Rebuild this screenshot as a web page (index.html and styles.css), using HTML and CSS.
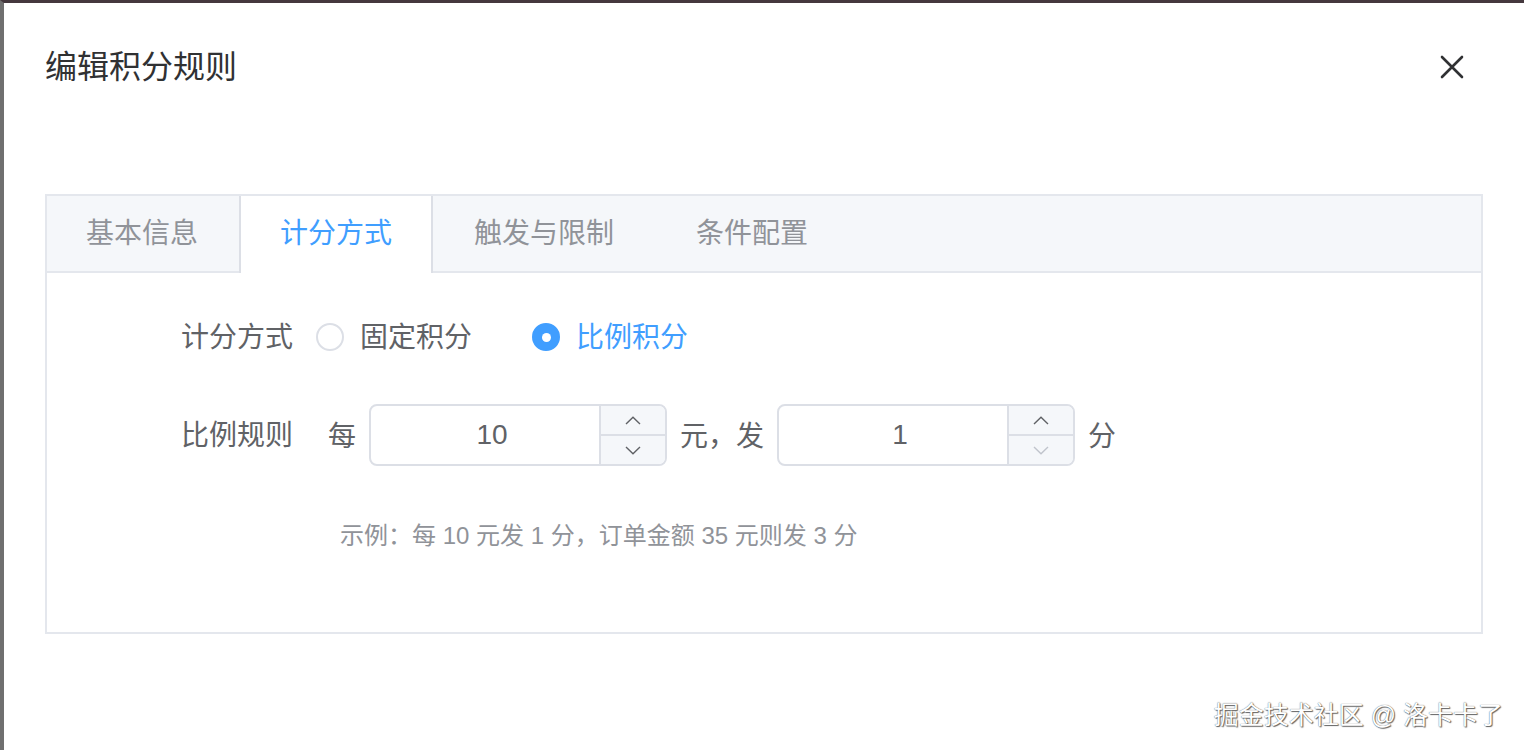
FILE: index.html
```html
<!DOCTYPE html>
<html lang="zh-CN">
<head>
<meta charset="utf-8">
<title>编辑积分规则</title>
<link rel="stylesheet" href="styles.css">
</head>
<body>
<div class="page">
  <div class="dialog-head">
    <div class="dialog-title">编辑积分规则</div>
    <svg class="close" width="24" height="24" viewBox="0 0 24 24"><path d="M2 2 L22 22 M22 2 L2 22" stroke="#303133" stroke-width="2.6" stroke-linecap="round" fill="none"/></svg>
  </div>

  <div class="tabs">
    <div class="tabs-head">
      <div class="tab tab-first">基本信息</div>
      <div class="tab tab-active">计分方式</div>
      <div class="tab">触发与限制</div>
      <div class="tab">条件配置</div>
    </div>
    <div class="tabs-body">
      <div class="form-row">
        <div class="form-label">计分方式</div>
        <div class="radio">
          <span class="radio-dot"></span>
          <span class="radio-text">固定积分</span>
        </div>
        <div class="radio radio-checked">
          <span class="radio-dot"></span>
          <span class="radio-text">比例积分</span>
        </div>
      </div>
      <div class="form-row">
        <div class="form-label">比例规则</div>
        <div class="rule">
          <span class="word word-first">每</span>
          <div class="num">
            <span class="num-val">10</span>
            <div class="num-ctrl">
              <span class="num-btn num-up"><svg width="16" height="9" viewBox="0 0 16 9"><path d="M1 8 L8 1.2 L15 8" stroke="#606266" stroke-width="1.4" fill="none"/></svg></span>
              <span class="num-btn"><svg width="16" height="9" viewBox="0 0 16 9"><path d="M1 1 L8 7.8 L15 1" stroke="#606266" stroke-width="1.4" fill="none"/></svg></span>
            </div>
          </div>
          <span class="word">元，发</span>
          <div class="num">
            <span class="num-val">1</span>
            <div class="num-ctrl">
              <span class="num-btn num-up"><svg width="16" height="9" viewBox="0 0 16 9"><path d="M1 8 L8 1.2 L15 8" stroke="#606266" stroke-width="1.4" fill="none"/></svg></span>
              <span class="num-btn"><svg width="16" height="9" viewBox="0 0 16 9"><path d="M1 1 L8 7.8 L15 1" stroke="#c0c4cc" stroke-width="1.4" fill="none"/></svg></span>
            </div>
          </div>
          <span class="word">分</span>
        </div>
      </div>
      <div class="example">示例：每 10 元发 1 分，订单金额 35 元则发 3 分</div>
    </div>
  </div>
</div>
<div class="watermark">掘金技术社区 @ 洛卡卡了</div>
</body>
</html>
```

FILE: styles.css
```css
html, body {
  margin: 0;
  padding: 0;
  background: #ffffff;
}
body {
  font-family: "Liberation Sans", "Noto Sans CJK SC", sans-serif;
  width: 1524px;
  height: 750px;
  overflow: hidden;
  position: relative;
}
.page {
  box-sizing: border-box;
  height: 750px;
  border-top: 3px solid #45383e;
  border-left: 4px solid #6f6f6f;
  padding: 42px 41px 0 41px;
}
.dialog-head {
  display: flex;
  align-items: center;
  justify-content: space-between;
  padding-right: 19px;
}
.dialog-title {
  font-size: 32px;
  line-height: 44px;
  color: #303133;
}
.close {
  display: block;
}
.tabs {
  margin-top: 105px;
  border: 2px solid #e4e7ed;
  background: #fff;
}
.tabs-head {
  display: flex;
  height: 75px;
  background: #f5f7fa;
  border-bottom: 2px solid #e4e7ed;
}
.tab {
  box-sizing: border-box;
  height: 77px;
  margin-bottom: -2px;
  padding: 0 39px 7px 39px;
  border-left: 2px solid transparent;
  border-right: 2px solid transparent;
  display: flex;
  align-items: center;
  font-size: 28px;
  color: #909399;
}
.tab-first {
  margin-left: -2px;
}
.tab-active {
  background: #fff;
  color: #409eff;
  border-left-color: #dcdfe6;
  border-right-color: #dcdfe6;
}
.tabs-body {
  padding: 33px 0 79px 134px;
}
.form-row {
  display: flex;
  align-items: center;
  height: 62px;
  margin-bottom: 36px;
}
.form-row + .form-row {
  margin-bottom: 53px;
}
.form-label {
  width: 112px;
  margin-right: 23px;
  padding-bottom: 4px;
  font-size: 28px;
  color: #606266;
}
.radio {
  display: flex;
  align-items: center;
  margin-right: 60px;
  font-size: 28px;
  color: #606266;
}
.radio-text {
  padding-bottom: 4px;
}
.radio-dot {
  box-sizing: border-box;
  width: 28px;
  height: 28px;
  border-radius: 50%;
  border: 2px solid #dcdfe6;
  background: #fff;
  margin-right: 16px;
  display: flex;
  align-items: center;
  justify-content: center;
}
.radio-checked {
  color: #409eff;
}
.radio-checked .radio-dot {
  border-color: #409eff;
  background: #409eff;
}
.radio-checked .radio-dot::after {
  content: "";
  width: 9px;
  height: 9px;
  border-radius: 50%;
  background: #fff;
}
.rule {
  display: flex;
  align-items: center;
  gap: 13px;
}
.word {
  font-size: 28px;
  color: #606266;
  padding-bottom: 3px;
}
.word-first {
  margin-left: 12px;
}
.num {
  box-sizing: border-box;
  display: flex;
  width: 298px;
  height: 62px;
  border: 2px solid #dcdfe6;
  border-radius: 8px;
  overflow: hidden;
  background: #fff;
}
.num-val {
  flex: 1;
  display: flex;
  align-items: center;
  justify-content: center;
  padding-left: 14px;
  font-size: 28px;
  color: #606266;
}
.num-ctrl {
  width: 64px;
  border-left: 2px solid #dcdfe6;
  background: #f5f7fa;
  display: flex;
  flex-direction: column;
}
.num-btn {
  flex: 1;
  display: flex;
  align-items: center;
  justify-content: center;
}
.num-btn svg {
  display: block;
}
.num-up {
  border-bottom: 2px solid #dcdfe6;
}
.example {
  margin-left: 159px;
  font-size: 24px;
  line-height: 34px;
  color: #909399;
}
.watermark {
  position: absolute;
  right: 21px;
  bottom: 20px;
  font-size: 25px;
  line-height: 30px;
  color: #ffffff;
  text-shadow: 0 0 1px #444, 1px 1px 1px #666;
}
```
